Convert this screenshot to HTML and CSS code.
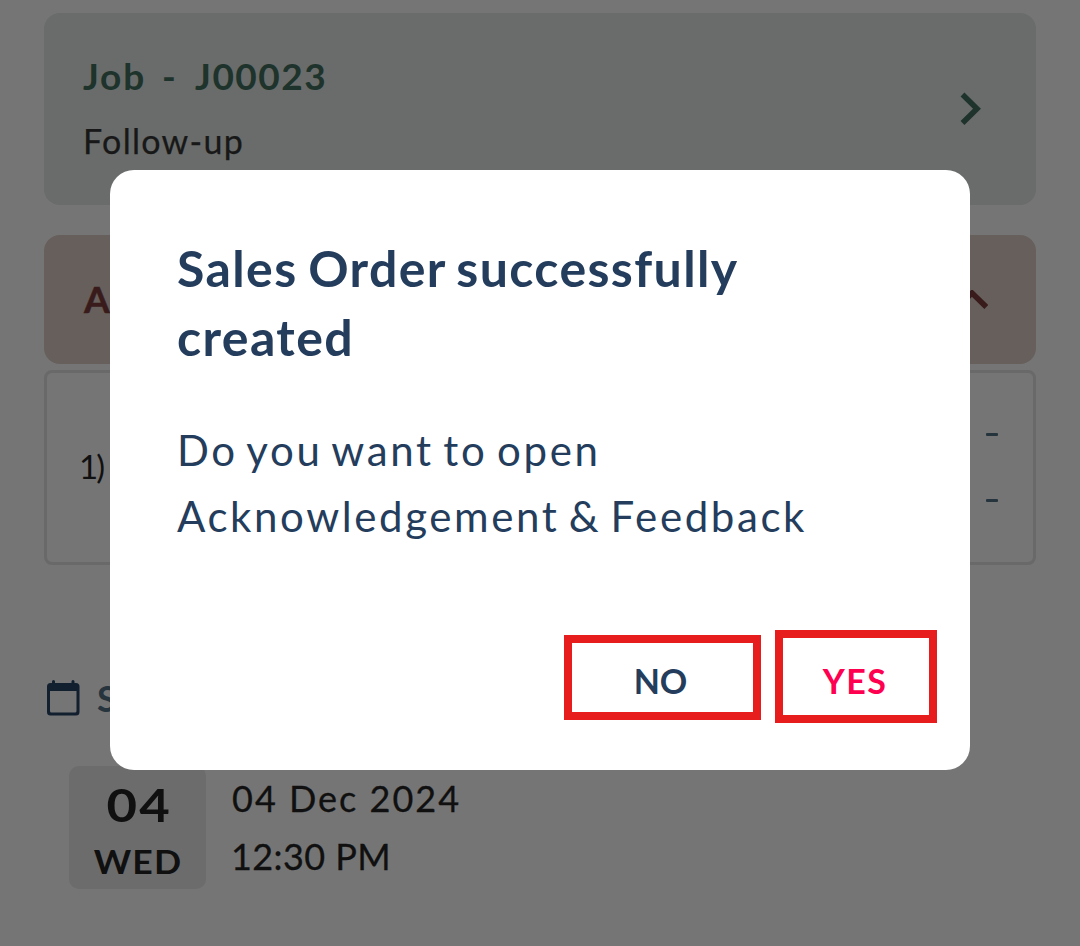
FILE: index.html
```html
<!DOCTYPE html>
<html lang="en">
<head>
<meta charset="utf-8">
<title>Job</title>
<link rel="stylesheet" href="styles.css">
</head>
<body>
<main class="screen">
  <section class="job-card">
    <div>
      <h2 class="job-title"><span class="job-label">Job</span><span class="job-dash">-</span><span class="job-number">J00023</span></h2>
      <p class="job-type"><span>Follow-up</span></p>
    </div>
    <svg class="chevron-right" width="21" height="34" viewBox="0 0 21 34"><path d="M2.500 2.500 17 16.700 2.500 31" fill="none" stroke="#1e332b" stroke-width="5.500"/></svg>
  </section>
  <section class="section-header">
    <span class="section-title">A</span>
    <svg width="32" height="20" viewBox="0 0 32 20"><path d="M1.500 17 16 3 30.300 17" fill="none" stroke="#381b1a" stroke-width="5.500"/></svg>
  </section>
  <section class="item-row">
    <span class="item-index">1)</span>
    <div class="item-values"><i class="dash"></i><i class="dash"></i></div>
  </section>
  <div class="schedule-header">
    <svg width="34" height="36" viewBox="0 0 34 36"><path fill="#111f2f" fill-rule="evenodd" d="M5 1.500a1.500 1.500 0 0 1 3 0V3h16.500V1.500a1.500 1.500 0 0 1 3 0V3h1.500a3.500 3.500 0 0 1 3.500 3.500V32a3.500 3.500 0 0 1-3.500 3.500H3.500A3.500 3.500 0 0 1 0 32V6.500A3.500 3.500 0 0 1 3.500 3H5zM3 11v20a1.500 1.500 0 0 0 1.500 1.500h23.500a1.500 1.500 0 0 0 1.500-1.500V11z"/></svg>
    <span class="schedule-title">S</span>
  </div>
  <div class="schedule">
    <div class="date-tile"><span class="day">04</span><span class="weekday">WED</span></div>
    <div class="datetime"><span class="date">04 Dec 2024</span><span class="time">12:30 PM</span></div>
  </div>
</main>
<div class="dialog" role="dialog">
  <h1 class="dialog-title">Sales Order successfully<br>created</h1>
  <p class="dialog-text"><span class="question">Do you want to open</span><br><span class="subject">Acknowledgement &amp; Feedback</span></p>
  <div class="actions">
    <button class="btn btn-no">NO</button>
    <button class="btn btn-yes">YES</button>
  </div>
</div>
</body>
</html>
```
FILE: styles.css
```css
* { box-sizing: border-box; margin: 0; padding: 0; }
body {
  position: relative;
  width: 1080px;
  height: 946px;
  overflow: hidden;
  background: #757575;
  font-family: Lato, "Open Sans", sans-serif;
}
.screen { padding: 12.500px 44px 0; }
.job-card {
  display: flex;
  justify-content: space-between;
  height: 192.500px;
  padding: 38px 55px 0 39px;
  border-radius: 16px;
  background: #696c6a;
}
.job-title { display: flex; font-size: 37px; line-height: 50px; font-weight: 700; color: #1e332b; }
.job-label { width: 79px; letter-spacing: 1.800px; }
.job-dash { width: 33px; }
.job-number { letter-spacing: 1.500px; }
.job-type { margin-top: 15px; font-size: 34px; line-height: 50px; font-weight: 400; color: #181818; letter-spacing: 1.300px; -webkit-text-stroke: 0.250px; }
.chevron-right { margin-top: 41px; }
.section-header {
  display: flex;
  align-items: center;
  justify-content: space-between;
  height: 129px;
  margin-top: 30px;
  padding: 0 48px 0 40px;
  border-radius: 16px;
  background: #665f5c;
}
.section-title { margin-top: -3px; font-size: 37px; font-weight: 700; color: #381b1a; -webkit-text-stroke: 0.500px; }
.item-row {
  display: flex;
  align-items: center;
  justify-content: space-between;
  height: 195px;
  margin-top: 6px;
  padding: 0 35px 0 32px;
  border: 3px solid #696969;
  border-radius: 8px;
}
.item-index { margin-top: -3px; font-size: 33px; color: #111; letter-spacing: -2px; }
.item-values { display: grid; gap: 63px; }
.dash { width: 12px; height: 3px; border-radius: 1px; background: #26343e; }
.schedule-header { display: flex; align-items: center; gap: 16px; height: 50px; margin: 108px 0 0 3px; }
.schedule-title { font-size: 36px; font-weight: 700; color: #26343e; }
.schedule { display: flex; gap: 26px; margin: 43px 0 0 25px; }
.date-tile {
  display: flex;
  flex-direction: column;
  align-items: center;
  width: 137px;
  height: 123px;
  padding-top: 11px;
  border-radius: 10px;
  background: #6c6c6c;
  color: #101010;
  font-weight: 700;
}
.day { padding-left: 3px; font-size: 45px; line-height: 56px; letter-spacing: 2px; transform: scaleX(1.170); }
.weekday { padding-left: 1px; font-size: 33px; line-height: 56px; letter-spacing: 1px; transform: scaleX(1.080); }
.datetime { display: flex; flex-direction: column; padding-top: 3px; font-size: 36px; line-height: 58px; font-weight: 400; color: #101010; -webkit-text-stroke: 0.300px; }
.date { letter-spacing: 2px; }
.time { margin-left: -1px; letter-spacing: 0.400px; }
.dialog {
  position: absolute;
  left: 110px;
  top: 170px;
  width: 860px;
  height: 599.500px;
  padding: 64px 33px 0 67px;
  border-radius: 24px;
  background: #fff;
  color: #243d5c;
}
.dialog-title { font-size: 50px; line-height: 69px; font-weight: 700; letter-spacing: 1.400px; word-spacing: -3px; white-space: nowrap; }
.dialog-text { margin-top: 45px; font-size: 42px; line-height: 66px; font-weight: 400; word-spacing: -4px; white-space: nowrap; }
.question { letter-spacing: 2.700px; }
.subject { letter-spacing: 2.600px; }
.actions { display: flex; justify-content: flex-end; align-items: center; gap: 14px; height: 93px; margin-top: 81px; }
.btn {
  border: 8.500px solid #e71c1c;
  background: none;
  font-family: inherit;
  font-size: 34px;
  font-weight: 700;
  color: #243d5c;
}
.btn-no { width: 197px; height: 85px; margin-top: 1px; padding: 6px 4px 0 0; }
.btn-yes { width: 162px; height: 93px; padding: 7px 2px 0 0; letter-spacing: 1.500px; color: #ff0050; }
```
